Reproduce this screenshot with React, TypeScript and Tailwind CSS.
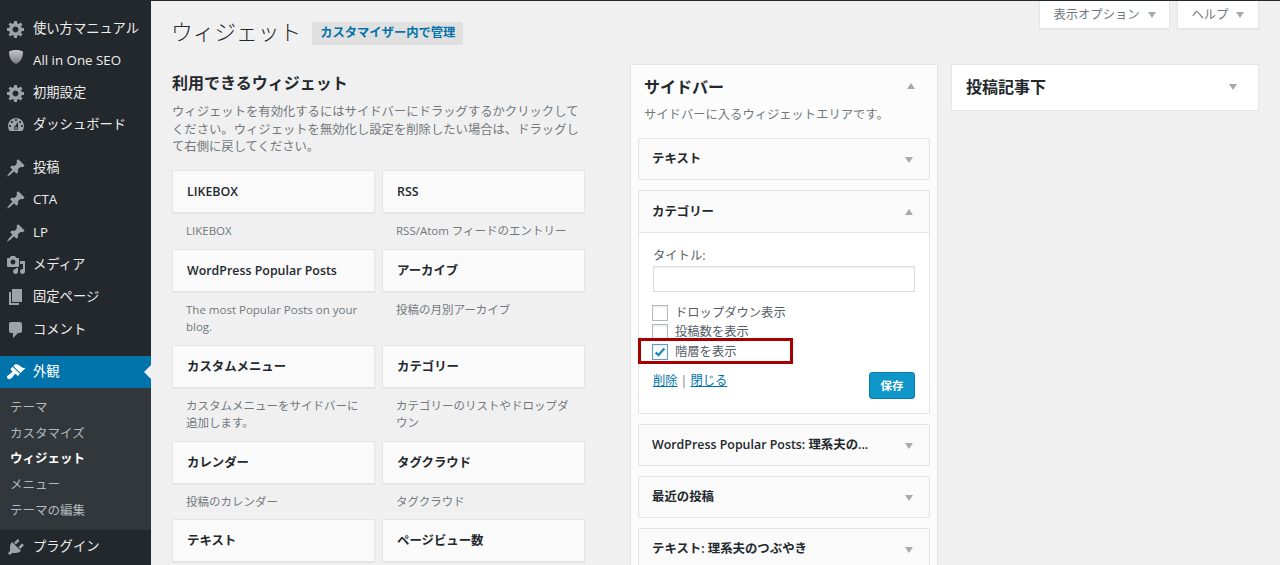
import React from "react";

const P = {
  gear: "M18 12h-2.18c-.17.7-.44 1.35-.81 1.93l1.54 1.54-2.1 2.1-1.54-1.54c-.58.36-1.23.63-1.91.79V19H8v-2.18c-.68-.16-1.33-.43-1.91-.79l-1.54 1.54-2.12-2.12 1.54-1.54c-.36-.58-.63-1.23-.79-1.91H1V9.03h2.17c.16-.7.44-1.35.8-1.94L2.43 5.55l2.1-2.1 1.54 1.54c.58-.37 1.24-.64 1.93-.81V2h3v2.18c.68.16 1.33.43 1.91.79l1.54-1.54 2.12 2.12-1.54 1.54c.36.59.64 1.24.8 1.94H18V12zm-8.5 1.5c1.66 0 3-1.34 3-3s-1.34-3-3-3-3 1.34-3 3 1.34 3 3 3z",
  shield: "M10 2c3 0 5.500.6 7 1.600 0 6-2.200 10.600-7 12.400C5.200 14.200 3 9.600 3 3.600 4.500 2.600 7 2 10 2z",
  dash: "M3.76 16h12.48c1.1-1.37 1.76-3.11 1.76-5 0-4.42-3.58-8-8-8s-8 3.58-8 8c0 1.89.66 3.63 1.76 5zM10 4c.55 0 1 .45 1 1s-.45 1-1 1-1-.45-1-1 .45-1 1-1zM6 6c.55 0 1 .45 1 1s-.45 1-1 1-1-.45-1-1 .45-1 1-1zm8 0c.55 0 1 .45 1 1s-.45 1-1 1-1-.45-1-1 .45-1 1-1zm-5.37 5.55L12 7v6c0 1.1-.9 2-2 2s-2-.9-2-2c0-.57.24-1.08.63-1.45zM4 10c.55 0 1 .45 1 1s-.45 1-1 1-1-.45-1-1 .45-1 1-1zm12 0c.55 0 1 .45 1 1s-.45 1-1 1-1-.45-1-1 .45-1 1-1zm-5 3c0-.55-.45-1-1-1s-1 .45-1 1 .45 1 1 1 1-.45 1-1z",
  pin: "M10.44 3.02l1.82-1.82 6.36 6.35-1.83 1.82c-1.05-.68-2.48-.57-3.41.36l-.75.75c-.92.93-1.04 2.35-.35 3.41l-1.83 1.82-2.41-2.41-2.8 2.79c-.42.42-3.38 2.71-3.8 2.29s1.86-3.39 2.28-3.81l2.79-2.79L4.1 9.36l1.83-1.82c1.05.69 2.48.57 3.4-.36l.75-.75c.93-.92 1.05-2.35.36-3.41z",
  media: "M13 11V4c0-.55-.45-1-1-1h-1.67L9 1H5L3.67 3H2c-.55 0-1 .45-1 1v7c0 .55.45 1 1 1h10c.55 0 1-.45 1-1zM7 4.500c1.380 0 2.500 1.120 2.500 2.500S8.380 9.500 7 9.500 4.500 8.380 4.500 7 5.620 4.500 7 4.500zM14 6h5v10.500c0 1.380-1.120 2.500-2.500 2.500S14 17.880 14 16.500s1.120-2.500 2.500-2.500c.17 0 .34.02.5.05V9h-3V6zm-4 8.050V13h2v3.500c0 1.380-1.120 2.500-2.500 2.500S7 17.880 7 16.500 8.120 14 9.500 14c.17 0 .34.02.5.05z",
  page: "M6 15V2h10v13H6zm-1 1h8v2H3V5h2v11z",
  comment: "M5 2h9c1.100 0 2 .9 2 2v7c0 1.100-.9 2-2 2h-2l-5 5v-5H5c-1.100 0-2-.9-2-2V4c0-1.100.9-2 2-2z",
  brush: "M14.480 11.060L7.410 3.990l1.500-1.500c.5-.56 2.300-.47 3.510.32 1.210.8 1.430 1.280 2.910 2.100 1.180.64 2.450 1.260 4.450.85zm-.71.71L6.700 4.700 4.930 6.470c-.39.39-.39 1.020 0 1.410l1.060 1.060c.39.39.39 1.030 0 1.420-.6.6-1.430 1.110-2.210 1.690-.35.26-.7.53-1.010.84C1.430 13.230 1 14.230 1 15.020c0 .39.1.77.29 1.090.19.32.46.58.79.78.31.19.68.3 1.060.3.86 0 1.860-.43 3.050-1.620.31-.31.58-.66.84-1.010.58-.78 1.090-1.610 1.690-2.210.39-.39 1.030-.39 1.420 0l1.060 1.060c.39.39 1.020.39 1.410 0z",
  plug: "M13.110 4.360L9.870 7.600 8 5.730l3.240-3.240c.35-.34 1.050-.2 1.560.32.52.51.66 1.210.31 1.550zm-8 1.770l.91-1.120 9.010 9.010-1.190.84c-.71.71-2.630 1.160-3.820 1.160H6.140L4.900 17.260c-.59.59-1.540.59-2.120 0-.59-.58-.59-1.530 0-2.120l1.240-1.240v-3.880c0-1.130.4-3.190 1.090-3.890zm7.260 3.970l3.240-3.240c.34-.35 1.040-.21 1.550.31.52.51.66 1.210.31 1.550l-3.240 3.250z",
};

function Icon({ d, active }: { d: string; active?: boolean }) {
  return (
    <svg viewBox="0 0 20 20" className={active ? "w-[20px] h-[20px] fill-white shrink-0" : "w-[20px] h-[20px] fill-[#9ea3a8] shrink-0"}>
      <path d={d} />
    </svg>
  );
}

function MenuItem({ d, label }: { d: string; label: string }) {
  return (
    <div className="h-[32.300px] flex items-center pl-[6px] gap-[7px] text-[13.300px] text-[#eeeeee]">
      <Icon d={d} />
      <span>{label}</span>
    </div>
  );
}

function Caret({ up, color = "border-[#a9a9a9]" }: { up?: boolean; color?: string }) {
  return up ? (
    <span className={`w-0 h-0 border-x-[4.500px] border-x-transparent border-b-[6px] ${color}`} />
  ) : (
    <span className={`w-0 h-0 border-x-[4.500px] border-x-transparent border-t-[6px] ${color}`} />
  );
}

function AvailCard({ title, desc }: { title: string; desc: string }) {
  return (
    <div>
      <div className="h-[43px] bg-[#fafafa] border border-[#e5e5e5] shadow-[0_1px_1px_rgba(0,0,0,0.04)] flex items-center px-[14px] pt-[2px] text-[12.400px] font-semibold text-[#23282d]">
        {title}
      </div>
      <p className="mt-[9px] px-[14px] text-[11.500px] leading-[17px] text-[#72777c]">{desc}</p>
    </div>
  );
}

function WidgetBar({ title, up, tall }: { title: string; up?: boolean; tall?: boolean }) {
  return (
    <div className={`${tall ? "h-[43px]" : "h-[42px]"} shrink-0 flex items-center justify-between pl-[13px] pr-[16px] pt-[1px] bg-[#fafafa] border border-[#e5e5e5] text-[12.400px] font-semibold text-[#23282d]`}>
      <span>{title}</span>
      <Caret up={up} />
    </div>
  );
}

function Check({ checked }: { checked?: boolean }) {
  return (
    <span className={`-ml-[1px] w-[16px] h-[16px] bg-white border ${checked ? "border-[#5b9dd9]" : "border-[#b4b9be]"} shadow-[inset_0_1px_2px_rgba(0,0,0,0.1)] flex items-center justify-center shrink-0`}>
      {checked && (
        <svg viewBox="0 0 16 16" className="w-[14px] h-[14px]">
          <path d="M3 8.500l3.200 3L13 4" fill="none" stroke="#1e8cbe" strokeWidth="2.600" />
        </svg>
      )}
    </span>
  );
}

const rows = [
  [["LIKEBOX", "LIKEBOX"], ["RSS", "RSS/Atom フィードのエントリー"], "h-[79px]"],
  [["WordPress Popular Posts", "The most Popular Posts on your blog."], ["アーカイブ", "投稿の月別アーカイブ"], "h-[96px]"],
  [["カスタムメニュー", "カスタムメニューをサイドバーに追加します。"], ["カテゴリー", "カテゴリーのリストやドロップダウン"], "h-[96px]"],
  [["カレンダー", "投稿のカレンダー"], ["タグクラウド", "タグクラウド"], "h-[78px]"],
  [["テキスト", ""], ["ページビュー数", ""], "h-[79px]"],
] as const;

const topItem = "h-[32px] flex items-center pl-[6px] gap-[7px] text-[13.300px] text-[#eeeeee]";

export default function App() {
  return (
    <div
      className="w-[1280px] h-[565px] overflow-hidden flex bg-[#f0f0f0] border-t border-t-[#23282d]"
      style={{ fontFamily: '"Open Sans","Noto Sans CJK JP",sans-serif' }}
    >
      <aside className="w-[151px] shrink-0 bg-[#23282d] pt-[12px] flex flex-col">
        <div className="flex flex-col">
          <div className={topItem}><Icon d={P.gear} /><span>使い方マニュアル</span></div>
          <div className={topItem}>
            <svg viewBox="0 0 20 20" className="w-[20px] h-[20px] shrink-0 -translate-y-[3px]">
              <defs>
                <linearGradient id="sh" x1="0" y1="0" x2="0" y2="1">
                  <stop offset="0" stopColor="#c4c6c8" />
                  <stop offset="1" stopColor="#777b7f" />
                </linearGradient>
              </defs>
              <path d={P.shield} fill="url(#sh)" />
            </svg>
            <span>All in One SEO</span>
          </div>
          <div className={topItem}><Icon d={P.gear} /><span>初期設定</span></div>
          <div className={topItem}><Icon d={P.dash} /><span>ダッシュボード</span></div>
        </div>
        <div className="mt-[11px] flex flex-col">
          <MenuItem d={P.pin} label="投稿" />
          <MenuItem d={P.pin} label="CTA" />
          <MenuItem d={P.pin} label="LP" />
          <MenuItem d={P.media} label="メディア" />
          <MenuItem d={P.page} label="固定ページ" />
          <MenuItem d={P.comment} label="コメント" />
        </div>
        <div className="mt-[10px] h-[32px] shrink-0 bg-[#0073aa] flex items-center pl-[6px] gap-[7px] text-[13.300px] text-white relative">
          <Icon d={P.brush} active />
          <span>外観</span>
          <span className="absolute right-0 top-[9px] w-0 h-0 border-y-[7px] border-y-transparent border-r-[7px] border-r-[#f0f0f0]" />
        </div>
        <div className="h-[142px] shrink-0 bg-[#32373c] pt-[8px] pl-[10px] flex flex-col text-[12.500px] text-[#b4b9be]">
          <div className="h-[25.600px] flex items-center">テーマ</div>
          <div className="h-[25.600px] flex items-center">カスタマイズ</div>
          <div className="h-[25.600px] flex items-center font-semibold text-white">ウィジェット</div>
          <div className="h-[25.600px] flex items-center">メニュー</div>
          <div className="h-[25.600px] flex items-center">テーマの編集</div>
        </div>
        <div className="pt-[1px]">
          <MenuItem d={P.plug} label="プラグイン" />
        </div>
      </aside>

      <main className="flex-1 min-w-0 relative pl-[21px]">
        <div className="absolute top-0 right-[21px] flex gap-[7px] text-[12.300px] text-[#72777c]">
          <div className="w-[131px] h-[28px] pt-[1px] bg-white border border-[#e5e5e5] border-t-0 shadow-[0_1px_1px_rgba(0,0,0,0.04)] flex items-center justify-center gap-[8px]">
            <span>表示オプション</span>
            <Caret />
          </div>
          <div className="w-[82px] h-[28px] pt-[1px] bg-white border border-[#e5e5e5] border-t-0 shadow-[0_1px_1px_rgba(0,0,0,0.04)] flex items-center justify-center gap-[8px]">
            <span>ヘルプ</span>
            <Caret />
          </div>
        </div>

        <div className="flex items-center h-[34px] mt-[14px]">
          <h1 className="text-[21.700px] font-light text-[#23282d] -ml-[1px]">ウィジェット</h1>
          <span className="ml-[11px] mt-[2px] h-[23px] px-[8px] bg-[#e0e0e0] rounded-[2px] flex items-center text-[12.300px] font-semibold text-[#0073aa]">カスタマイザー内で管理</span>
        </div>

        <div className="flex mt-[15px]">
          <section className="w-[414px] shrink-0">
            <h2 className="mt-[7px] text-[16px] leading-[24px] font-semibold text-[#23282d]">利用できるウィジェット</h2>
            <p className="mt-[8px] text-[12.330px] leading-[17.600px] text-[#72777c]">
              ウィジェットを有効化するにはサイドバーにドラッグするかクリックしてください。ウィジェットを無効化し設定を削除したい場合は、ドラッグして右側に戻してください。
            </p>
            <div className="mt-[14px] flex flex-col">
              {rows.map((r, i) => (
                <div key={i} className={`grid grid-cols-[203px_203px] gap-x-[7px] ${r[2]}`}>
                  <AvailCard title={r[0][0]} desc={r[0][1]} />
                  <AvailCard title={r[1][0]} desc={r[1][1]} />
                </div>
              ))}
            </div>
          </section>

          <section className="ml-[44px] w-[308px] shrink-0 bg-[#fcfcfc] border border-[#e5e5e5] h-[600px] px-[7px]">
            <div className="h-[73px] pl-[6px] pr-[12px] relative">
              <h3 className="pt-[10px] text-[16px] leading-[24px] font-semibold text-[#23282d]">サイドバー</h3>
              <p className="mt-[7px] text-[12.300px] leading-[18px] text-[#72777c]">サイドバーに入るウィジェットエリアです。</p>
              <span className="absolute right-[15px] top-[18px] flex"><Caret up /></span>
            </div>
            <div className="flex flex-col gap-[10px]">
              <WidgetBar title="テキスト" />
              <div className="shrink-0">
                <WidgetBar title="カテゴリー" up tall />
                <div className="h-[181px] bg-white border border-t-0 border-[#e5e5e5] px-[14px] pt-[14px] text-[12.300px] text-[#555d66] relative">
                  <div className="leading-[17px]">タイトル:</div>
                  <div className="mt-[2px] h-[26px] bg-white border border-[#dddddd] shadow-[inset_0_1px_2px_rgba(0,0,0,0.07)]" />
                  <div className="mt-[11px] flex flex-col">
                    <label className="h-[19.500px] flex items-center gap-[7px]"><Check /><span>ドロップダウン表示</span></label>
                    <label className="h-[19.500px] flex items-center gap-[7px]"><Check /><span>投稿数を表示</span></label>
                    <label className="h-[19.500px] flex items-center gap-[7px]"><Check checked /><span>階層を表示</span></label>
                  </div>
                  <div className="mt-[10px] flex items-center text-[#0073aa]">
                    <a className="underline">削除</a>
                    <span className="mx-[3px] text-[#72777c]">|</span>
                    <a className="underline">閉じる</a>
                  </div>
                  <button className="absolute right-[14px] bottom-[14px] w-[46px] h-[27px] bg-[#0f96c8] border border-[#0a7ba6] rounded-[3px] text-white text-[11.500px] font-semibold flex items-center justify-center">保存</button>
                  <div className="absolute -left-[1px] top-[105px] w-[155px] h-[26px] border-[3px] border-[#a80000]" />
                </div>
              </div>
              <WidgetBar title="WordPress Popular Posts: 理系夫の..." />
              <WidgetBar title="最近の投稿" />
              <WidgetBar title="テキスト: 理系夫のつぶやき" />
            </div>
          </section>

          <section className="ml-[13px] w-[308px] h-[47px] shrink-0 bg-white border border-[#e5e5e5] flex items-center justify-between pl-[14px] pr-[21px] pb-[2px]">
            <span className="text-[16px] font-semibold text-[#23282d]">投稿記事下</span>
            <Caret />
          </section>
        </div>
      </main>
    </div>
  );
}
